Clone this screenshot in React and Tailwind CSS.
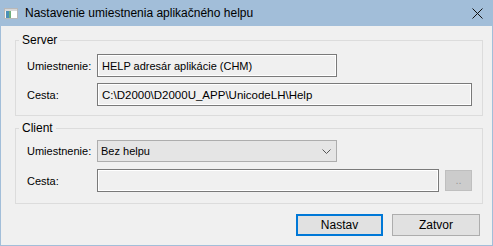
import React from 'react'

function AppIcon() {
  return (
    <svg width="14" height="11" viewBox="0 0 14 11" className="shrink-0">
      <rect x="0.5" y="0.5" width="13" height="10" fill="#f4f4f4" stroke="#b8b8b8" />
      <rect x="1" y="1" width="12" height="2" fill="#d8d8d8" />
      <rect x="2" y="3" width="3" height="7" fill="#4a8fb8" />
      <rect x="5" y="3" width="2" height="7" fill="#6fb07a" />
      <rect x="7" y="3" width="6" height="7" fill="#ffffff" />
    </svg>
  )
}

function Field({ width, children }) {
  return (
    <div
      className={`${width} h-[23px] border border-[#7a7a7a] bg-[#f0f0f0] shadow-[inset_0_0_0_1px_#ffffff] flex items-center pl-[4px] text-black whitespace-nowrap overflow-hidden`}
    >
      {children}
    </div>
  )
}

function Label({ children }) {
  return <div className="w-[70px] shrink-0 text-black">{children}</div>
}

export default function App() {
  return (
    <div
      className="w-[493px] h-[246px] flex flex-col bg-[#a2bed9] text-[11px] leading-[14px]"
      style={{ fontFamily: '"Liberation Sans", Arial, sans-serif' }}
    >
      {/* Title bar */}
      <div className="h-[26px] flex items-center pl-[4px] pr-[10px] text-black">
        <AppIcon />
        <span className="ml-[7px] text-[12px]">Nastavenie umiestnenia aplikačného helpu</span>
        <svg width="11" height="11" viewBox="0 0 11 11" className="ml-auto">
          <path d="M0.5 0.5 L10.5 10.5 M10.5 0.5 L0.5 10.5" stroke="#111" strokeWidth="1" />
        </svg>
      </div>

      {/* Body */}
      <div className="flex-1 mx-[1px] mb-[1px] bg-[#f0f0f0] flex flex-col">
        {/* Server */}
        <fieldset className="mt-[7px] ml-[14px] w-[468px] border border-[#dcdcdc] pl-[11px] pb-[9px]">
          <legend className="ml-[-8px] px-[3px] leading-[14px] text-[12px]">Server</legend>
          <div className="mt-[7px] flex items-center">
            <Label>Umiestnenie:</Label>
            <Field width="w-[240px]">HELP adresár aplikácie (CHM)</Field>
          </div>
          <div className="mt-[6px] flex items-center">
            <Label>Cesta:</Label>
            <Field width="w-[375px]">
              <span className="text-[11.5px]">C:\D2000\D2000U_APP\UnicodeLH\Help</span>
            </Field>
          </div>
        </fieldset>

        {/* Client */}
        <fieldset className="mt-[5px] ml-[14px] w-[468px] border border-[#dcdcdc] pl-[11px] pb-[11px]">
          <legend className="ml-[-8px] px-[3px] leading-[14px] text-[12px]">Client</legend>
          <div className="mt-[5px] flex items-center">
            <Label>Umiestnenie:</Label>
            <div className="w-[240px] h-[22px] border border-[#adadad] bg-[#e5e5e5] flex items-center pl-[3px] pr-[3px]">
              <span>Bez helpu</span>
              <svg width="9" height="5" viewBox="0 0 9 5" className="ml-auto mr-[2px]">
                <path d="M0.5 0.5 L4.5 4.5 L8.5 0.5" fill="none" stroke="#555" strokeWidth="1" />
              </svg>
            </div>
          </div>
          <div className="mt-[7px] flex items-center">
            <Label>Cesta:</Label>
            <Field width="w-[342px]"></Field>
            <div className="ml-[6px] w-[27px] h-[21px] border border-[#bfbfbf] bg-[#cccccc] flex items-center justify-center text-[#9a9a9a] leading-none">
              ..
            </div>
          </div>
        </fieldset>

        {/* Buttons */}
        <div className="mt-[10px] flex justify-end gap-[9px] mr-[12px]">
          <button className="w-[87px] h-[22px] border-2 border-[#0078d7] bg-[#e1e1e1] text-black text-[12px]">
            Nastav
          </button>
          <button className="w-[88px] h-[22px] border border-[#adadad] bg-[#e1e1e1] text-black text-[12px]">
            Zatvor
          </button>
        </div>
      </div>
    </div>
  )
}
